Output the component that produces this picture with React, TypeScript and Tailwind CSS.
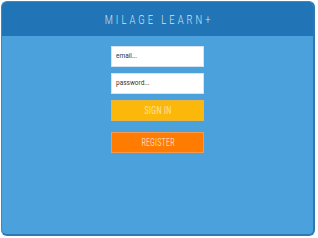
import React from "react";

export default function App() {
  return (
    <div className="w-[318px] h-[238px] bg-white pl-[1px] pt-[1px]">
      <div className="w-[314px] h-[235px] rounded-[6px] overflow-hidden border border-[#3b8ac6] border-r-[2px] border-b-[2px] border-r-[#2f78b0] border-b-[#2f78b0] bg-[#4aa1dc] flex flex-col">
        <div className="h-[34px] bg-[#2174b5] flex items-center justify-center shrink-0">
          <span
            className="inline-block text-[13px] leading-none text-[#d3e5f4] tracking-[4.2px] pl-[4.2px] scale-x-[0.72] whitespace-nowrap"
            style={{ fontFamily: "Roboto, 'DejaVu Sans', sans-serif", fontWeight: 300 }}
          >
            MILAGE LEARN+
          </span>
        </div>
        <div className="flex flex-col items-center pt-[10px]">
          <div className="w-[93px] h-[21px] bg-white border border-[#d6e3ee] flex items-center pl-[4px]">
            <span className="text-[6.5px] text-[#333]" style={{ fontFamily: "Roboto, sans-serif" }}>email...</span>
          </div>
          <div className="w-[93px] h-[21px] bg-white border border-[#d6e3ee] flex items-center pl-[4px] mt-[6px]">
            <span className="text-[6.5px] text-[#333]" style={{ fontFamily: "Roboto, sans-serif" }}>password...</span>
          </div>
          <div className="w-[93px] h-[21px] bg-[#fbb80a] border border-[#e9b53a] flex items-center justify-center mt-[6px]">
            <span className="inline-block text-[10px] leading-none text-[#fde4a0] tracking-[0.6px] pl-[0.6px] scale-x-[0.7] whitespace-nowrap" style={{ fontFamily: "Roboto, sans-serif" }}>SIGN IN</span>
          </div>
          <div className="w-[93px] h-[21px] bg-[#ff7b01] border border-[#f59a4a] flex items-center justify-center mt-[11px]">
            <span className="inline-block text-[10px] leading-none text-[#ffd6b0] tracking-[0.3px] pl-[0.3px] scale-x-[0.7] whitespace-nowrap" style={{ fontFamily: "Roboto, sans-serif" }}>REGISTER</span>
          </div>
        </div>
      </div>
    </div>
  );
}
